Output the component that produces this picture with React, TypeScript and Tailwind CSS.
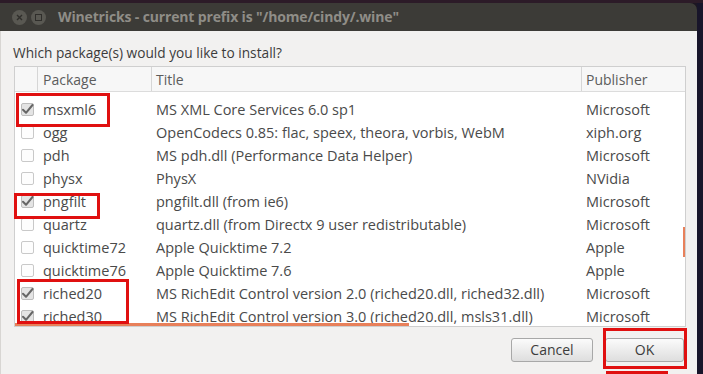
import React from "react";

const rows: { pkg: string; title: string; pub: string; checked: boolean }[] = [
  { pkg: "msxml6", title: "MS XML Core Services 6.0 sp1", pub: "Microsoft", checked: true },
  { pkg: "ogg", title: "OpenCodecs 0.85: flac, speex, theora, vorbis, WebM", pub: "xiph.org", checked: false },
  { pkg: "pdh", title: "MS pdh.dll (Performance Data Helper)", pub: "Microsoft", checked: false },
  { pkg: "physx", title: "PhysX", pub: "NVidia", checked: false },
  { pkg: "pngfilt", title: "pngfilt.dll (from ie6)", pub: "Microsoft", checked: true },
  { pkg: "quartz", title: "quartz.dll (from Directx 9 user redistributable)", pub: "Microsoft", checked: false },
  { pkg: "quicktime72", title: "Apple Quicktime 7.2", pub: "Apple", checked: false },
  { pkg: "quicktime76", title: "Apple Quicktime 7.6", pub: "Apple", checked: false },
  { pkg: "riched20", title: "MS RichEdit Control version 2.0 (riched20.dll, riched32.dll)", pub: "Microsoft", checked: true },
  { pkg: "riched30", title: "MS RichEdit Control version 3.0 (riched20.dll, msls31.dll)", pub: "Microsoft", checked: true },
];

function CheckBox({ checked }: { checked: boolean }) {
  return (
    <div
      className={
        "w-[13px] h-[13px] rounded-[2px] border flex items-center justify-center " +
        (checked ? "border-[#bdbdbd] bg-[#e4e4e4]" : "border-[#c9c9c9] bg-[#fdfdfd]")
      }
    >
      {checked && (
        <svg width="13" height="13" viewBox="0 0 13 13" className="shrink-0">
          <path d="M2 6.8 L5 9.8 L11.5 2" fill="none" stroke="#666666" strokeWidth="2" strokeLinecap="round" strokeLinejoin="round" />
        </svg>
      )}
    </div>
  );
}

export default function App() {
  const font = { fontFamily: '"Open Sans", "Noto Sans", "DejaVu Sans", sans-serif' };
  return (
    <div className="relative w-[703px] h-[374px] overflow-hidden bg-[#1d1622] flex flex-col" style={font}>
      <div className="h-[3px] bg-[#2c1b28] shrink-0" />
      <div className="flex flex-1 min-h-0">
        <div className="w-[697px] flex flex-col">
          {/* title bar */}
          <div className="h-[28px] bg-[#3c3b37] rounded-tr-[7px] flex items-center pl-[12px] shrink-0">
            <div className="w-[15px] h-[15px] rounded-full bg-[#595852] flex items-center justify-center">
              <svg width="7" height="7" viewBox="0 0 7 7">
                <path d="M1 1 L6 6 M6 1 L1 6" stroke="#2f2e2b" strokeWidth="1.4" />
              </svg>
            </div>
            <div className="ml-[4px] w-[15px] h-[15px] rounded-full bg-[#595852] flex items-center justify-center">
              <div className="w-[7px] h-[7px] border border-[#2f2e2b]" />
            </div>
            <div className="ml-[12px] text-[14px] font-bold text-[#8f8d87] leading-none tracking-[-0.15px]">
              Winetricks - current prefix is "/home/cindy/.wine"
            </div>
          </div>
          {/* body */}
          <div className="flex-1 bg-[#f2f1f0] pl-[13px] pr-[11px] pt-[12px] border-l border-[#d8d6d3]">
            <div className="text-[13.7px] leading-[20px] text-[#3c3c3c] -ml-[1px]">Which package(s) would you like to install?</div>
            <div className="relative mt-[3px] h-[261px] border border-[#cfcfcf] bg-white overflow-hidden">
              {/* header */}
              <div className="h-[25px] flex border-b border-[#dcdcdc] bg-[#f7f7f7] text-[14px] text-[#5c5c5c]">
                <div className="w-[23px] border-r border-[#d6d6d6]" />
                <div className="w-[114px] border-r border-[#d6d6d6] pl-[5px] flex items-center">Package</div>
                <div className="w-[430px] border-r border-[#d6d6d6] pl-[4px] flex items-center">Title</div>
                <div className="flex-1 pl-[4px] flex items-center">Publisher</div>
              </div>
              <div className="pt-[6px]">
                {rows.map((r) => (
                  <div key={r.pkg} className="h-[23px] flex items-center text-[14.5px] text-[#4a4a4a]">
                    <div className="w-[23px] pl-[6px] flex items-center">
                      <CheckBox checked={r.checked} />
                    </div>
                    <div className="w-[114px] pl-[5px] whitespace-nowrap">{r.pkg}</div>
                    <div className="w-[430px] pl-[4px] whitespace-nowrap">{r.title}</div>
                    <div className="flex-1 pl-[4px] whitespace-nowrap">{r.pub}</div>
                  </div>
                ))}
              </div>
              {/* scroll indicator */}
              <div className="absolute left-[668px] top-[160px] w-[3px] h-[30px] bg-[#e8805a]" />
              {/* overshoot line */}
              <div className="absolute left-0 bottom-0 w-[394px] h-[3px] bg-[#e8805a]" />
            </div>
            <div className="flex justify-end gap-[12px] mt-[11px] pr-[2px]">
              <button className="w-[82px] h-[24px] rounded-[3px] border border-[#a8a8a8] bg-gradient-to-b from-[#fbfbfb] to-[#dedede] text-[14px] text-[#3c3c3c] leading-none">
                Cancel
              </button>
              <button className="w-[79px] h-[24px] rounded-[3px] border border-[#a8a8a8] bg-gradient-to-b from-[#fbfbfb] to-[#dedede] text-[14px] text-[#3c3c3c] leading-none">
                OK
              </button>
            </div>
          </div>
        </div>
        <div className="flex-1 bg-[#18152a]" />
      </div>

      {/* red annotations */}
      <div className="absolute left-[16px] top-[93px] w-[94px] h-[34px] border-[3px] border-[#e01010]" />
      <div className="absolute left-[14px] top-[193px] w-[86px] h-[26px] border-[3px] border-[#e01010]" />
      <div className="absolute left-[17px] top-[279px] w-[112px] h-[45px] border-[3px] border-[#e01010]" />
      <div className="absolute left-[603px] top-[328px] w-[84px] h-[41px] border-[3px] border-[#e01010]" />
      <div className="absolute left-[606px] top-[371px] w-[62px] h-[3px] bg-[#e01010]" />
    </div>
  );
}
